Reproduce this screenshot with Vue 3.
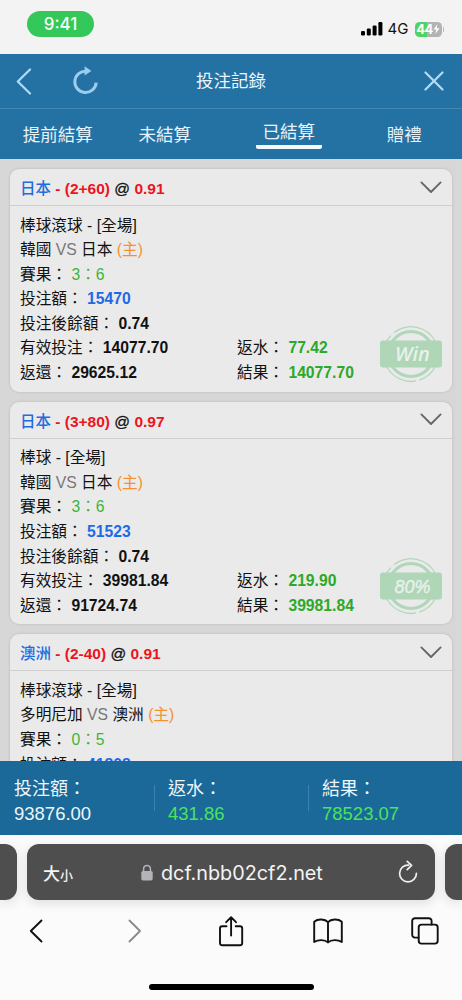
<template>
  <div class="phone">
    <div class="status-bar">
      <span class="clock">9:41</span>
      <div class="status-right">
        <svg class="signal" viewBox="0 0 22 14" width="22" height="14">
          <rect x="0" y="9" width="4" height="4.5" rx="1.2" />
          <rect x="5.8" y="6.5" width="4" height="7" rx="1.2" />
          <rect x="11.6" y="3.5" width="4" height="10" rx="1.2" />
          <rect x="17.4" y="0" width="4" height="13.5" rx="1.2" />
        </svg>
        <span class="network">4G</span>
        <div class="battery">
          <span>44</span>
          <svg viewBox="0 0 8 11" width="7" height="10"><path d="M5 0 0.5 6H3.6L2.8 11 7.5 4.6H4.3Z" /></svg>
        </div>
        <i class="battery-tip"></i>
      </div>
    </div>

    <header class="top-bar">
      <div class="top-left">
        <svg class="back" viewBox="0 0 16 28" width="16" height="28"><path d="M14 2.5 1.8 14.5 14 26.5" /></svg>
        <svg class="reload" viewBox="0 0 28 30" width="28" height="30">
          <path class="arc" d="M15.5 5.2A10.7 10.7 0 1 0 25.2 16.6" />
          <path class="head" d="M13.6 0.2 20.4 5 13.6 9.6Z" />
        </svg>
      </div>
      <h1>投注記錄</h1>
      <svg class="close" viewBox="0 0 20 20" width="20" height="20"><path d="M1.5 1.5 18.5 18.5M18.5 1.5 1.5 18.5" /></svg>
    </header>

    <nav class="tabs">
      <button
        v-for="tab in tabs"
        :key="tab.key"
        type="button"
        :class="['tab', tab.key, { active: tab.key === activeTab }]"
        @click="activeTab = tab.key"
      >
        <span>{{ tab.label }}</span>
      </button>
    </nav>

    <main class="list">
      <article v-for="bet in bets" :key="bet.id" class="card">
        <div class="card-header">
          <p>
            <span class="team">{{ bet.pick }}</span>
            <b class="red"> - ({{ bet.line }})</b>
            <span class="at"> @ </span>
            <b class="red">{{ bet.odds }}</b>
          </p>
          <svg viewBox="0 0 22 13" width="22" height="13"><path d="M1.4 1.4 11 11 20.6 1.4" /></svg>
        </div>
        <div class="card-body">
          <p>{{ bet.game }} - [全場]</p>
          <p>{{ bet.away }} <span class="vs">VS</span> {{ bet.home }} <span class="host">(主)</span></p>
          <p>賽果： <span class="score">{{ bet.score }}</span></p>
          <p>投注額： <b class="blue">{{ bet.stake }}</b></p>
          <template v-if="bet.result">
            <p>投注後餘額： <b>{{ bet.balance }}</b></p>
            <div class="pair">
              <p>有效投注： <b>{{ bet.valid }}</b></p>
              <p>返水： <b class="green">{{ bet.rebate }}</b></p>
            </div>
            <div class="pair">
              <p>返還： <b>{{ bet.returned }}</b></p>
              <p>結果： <b class="green">{{ bet.result }}</b></p>
            </div>
            <svg class="stamp" viewBox="0 0 62 58" width="62" height="58">
              <circle class="outer" cx="31" cy="29" r="27.3" stroke-dasharray="60 5 22 3 46 4 18 4" transform="rotate(-110 31 29)" />
              <circle class="inner" cx="31" cy="29" r="22.5" />
              <rect x="0" y="15.5" width="62" height="27" rx="3" />
              <text x="32.5" y="35.5" :class="{ percent: bet.stamp !== 'Win' }">{{ bet.stamp }}</text>
            </svg>
          </template>
        </div>
      </article>
    </main>

    <section class="totals">
      <div v-for="item in totals" :key="item.label" class="total">
        <p>{{ item.label }}：</p>
        <p :class="['value', { win: item.win }]">{{ item.value }}</p>
      </div>
    </section>

    <footer class="browser">
      <div class="address-row">
        <div class="side-page left"></div>
        <div class="address">
          <span class="text-size">大<small>小</small></span>
          <div class="url">
            <svg viewBox="0 0 12 17" width="12" height="17">
              <path class="shackle" d="M2.6 8V4.8a3.4 3.4 0 0 1 6.8 0V8" />
              <rect x="0.3" y="7" width="11.4" height="9.4" rx="1.6" />
            </svg>
            <span>dcf.nbb02cf2.net</span>
          </div>
          <svg class="refresh" viewBox="0 0 20 24" width="20" height="24">
            <path d="M10.6 5.1A8.4 8.4 0 1 0 18.4 13.4M9.2 1.4 13.6 5.4 9.2 9.6" />
          </svg>
        </div>
        <div class="side-page right"></div>
      </div>
      <div class="toolbar">
        <svg viewBox="0 0 14 24" height="24"><path d="M12.5 1.5 1.8 12 12.5 22.5" /></svg>
        <svg class="dim" viewBox="0 0 14 24" height="24"><path d="M3.5 1.5 14 12 3.5 22.5" /></svg>
        <svg viewBox="0 0 26 32" height="32">
          <path d="M8.5 11.2H4.2A2.2 2.2 0 0 0 2 13.4V28a2.2 2.2 0 0 0 2.2 2.2H22a2.2 2.2 0 0 0 2.2-2.2V13.4A2.2 2.2 0 0 0 22 11.2H17.7M13.1 20.5V2.5M8.2 7.2 13.1 2.2 18 7.2" />
        </svg>
        <svg viewBox="0 0 30 26" height="26">
          <path d="M15 4.2C12 .9 5 .5 1.2 3.7V24c4-2.6 10.5-2.6 13.8.4 3.3-3 9.8-3 13.8-.4V3.7C25 .5 18 .9 15 4.2ZM15 4.2V24.4" />
        </svg>
        <svg viewBox="0 0 28 28" height="28">
          <rect x="7.7" y="7.6" width="19" height="19" rx="2.8" />
          <path d="M7.5 20.6H4A2.8 2.8 0 0 1 1.2 17.8V4A2.8 2.8 0 0 1 4 1.2H17.8A2.8 2.8 0 0 1 20.6 4V7.5" />
        </svg>
      </div>
      <div class="home-indicator"></div>
    </footer>
  </div>
</template>

<script setup>
import { ref } from 'vue'

const activeTab = ref('settled')

const tabs = [
  { key: 'early', label: '提前結算' },
  { key: 'open', label: '未結算' },
  { key: 'settled', label: '已結算' },
  { key: 'gift', label: '贈禮' }
]

const bets = [
  {
    id: 1,
    pick: '日本',
    line: '2+60',
    odds: '0.91',
    game: '棒球滾球',
    away: '韓國',
    home: '日本',
    score: '3：6',
    stake: '15470',
    balance: '0.74',
    valid: '14077.70',
    returned: '29625.12',
    rebate: '77.42',
    result: '14077.70',
    stamp: 'Win'
  },
  {
    id: 2,
    pick: '日本',
    line: '3+80',
    odds: '0.97',
    game: '棒球',
    away: '韓國',
    home: '日本',
    score: '3：6',
    stake: '51523',
    balance: '0.74',
    valid: '39981.84',
    returned: '91724.74',
    rebate: '219.90',
    result: '39981.84',
    stamp: '80%'
  },
  {
    id: 3,
    pick: '澳洲',
    line: '2-40',
    odds: '0.91',
    game: '棒球滾球',
    away: '多明尼加',
    home: '澳洲',
    score: '0：5',
    stake: '41808'
  }
]

const totals = [
  { label: '投注額', value: '93876.00' },
  { label: '返水', value: '431.86', win: true },
  { label: '結果', value: '78523.07', win: true }
]
</script>

<style>
body {
  margin: 0;
}
</style>

<style scoped>
.phone {
  width: 462px;
  height: 1000px;
  display: flex;
  flex-direction: column;
  overflow: hidden;
  background: #f3f3f3;
  color: #111;
  font-family: "Liberation Sans", "Noto Sans CJK TC", sans-serif;
}

p,
h1 {
  margin: 0;
}

svg {
  display: block;
  flex: none;
  fill: none;
  stroke-linecap: round;
  stroke-linejoin: round;
}

.status-bar {
  height: 54px;
  flex: none;
  box-sizing: border-box;
  padding: 11px 18px 0 27px;
  display: flex;
  justify-content: space-between;
  align-items: flex-start;
  font-family: Inter, sans-serif;
}

.clock {
  width: 67px;
  height: 26px;
  border-radius: 13px;
  background: #34c759;
  color: #f4fff6;
  font-size: 17px;
  font-weight: 500;
  line-height: 26px;
  text-align: center;
}

.status-right {
  display: flex;
  align-items: center;
  padding-top: 9px;
}

.signal {
  fill: #000;
}

.network {
  margin: 0 6px 0 5px;
  font-size: 15px;
  line-height: 18px;
}

.battery {
  width: 27px;
  height: 15px;
  border-radius: 4.5px;
  background: linear-gradient(90deg, #4fd366 45%, #b3b3b5 45%);
  display: flex;
  align-items: center;
  justify-content: center;
  color: #fff;
  font-size: 13px;
  font-weight: 700;
  letter-spacing: -0.5px;
}

.battery svg {
  fill: #fff;
}

.battery-tip {
  width: 1.5px;
  height: 5px;
  margin-left: 1px;
  border-radius: 1px;
  background: #bbb;
}

.top-bar {
  height: 54px;
  flex: none;
  display: grid;
  grid-template-columns: 1fr auto 1fr;
  align-items: center;
  padding: 0 18px;
  background: #2472a4;
  border-bottom: 1px solid #4289b6;
}

.top-bar h1 {
  color: #eaf5fc;
  font-size: 17.5px;
  font-weight: 400;
  line-height: 24px;
}

.top-left {
  display: flex;
  align-items: center;
  gap: 39px;
  margin-left: -2px;
}

.back,
.close {
  stroke: #b5dbf4;
  stroke-width: 2.2;
}

.close {
  justify-self: end;
}

.reload .arc {
  stroke: #9ccdee;
  stroke-width: 3;
  stroke-linecap: butt;
}

.reload .head {
  fill: #9ccdee;
}

.tabs {
  height: 50px;
  flex: none;
  display: grid;
  grid-template-columns: repeat(4, 1fr);
  background: #2472a4;
}

.tab {
  border: 0;
  padding: 2px 0 0;
  background: none;
  color: #e6f3fb;
  font: inherit;
  font-size: 17.5px;
  line-height: 24px;
}

.tab.open {
  padding-right: 17px;
}

.tab.active {
  padding-top: 0;
}

.tab.active span {
  display: inline-block;
  width: 66px;
  line-height: 26px;
  border-bottom: 4px solid #f2f8fc;
  border-radius: 0 0 2px 2px;
}

.list {
  flex: 1;
  min-height: 0;
  overflow: hidden;
  padding: 10px 10px 0;
  background: #d7d7d7;
}

.card {
  height: 222.7px;
  margin-bottom: 10px;
  border-radius: 9px;
  background: #eaeaea;
  box-shadow: 0 0 3px rgba(0, 0, 0, 0.14);
  font-size: 15.7px;
}

.card-header {
  height: 37px;
  box-sizing: border-box;
  padding: 0 10px;
  display: flex;
  align-items: center;
  justify-content: space-between;
  border-bottom: 1px solid #cfcfcf;
  font-size: 15.5px;
}

.card-header svg {
  stroke: #676767;
  stroke-width: 1.9;
}

.team {
  color: #1d6ce0;
  font-weight: 500;
}

.at {
  -webkit-text-stroke: 0.3px #111;
}

.red {
  color: #ea1520;
}

.card-body {
  position: relative;
  padding: 7.5px 10px 0;
}

.card-body p {
  height: 24.6px;
  line-height: 24.6px;
  white-space: nowrap;
}

.pair {
  display: grid;
  grid-template-columns: 217px 1fr;
}

.vs {
  color: #777;
}

.host {
  color: #f4922e;
}

.score {
  color: #3fb43c;
}

.blue {
  color: #1e69e6;
}

.green {
  color: #2ba928;
}

.stamp {
  position: absolute;
  right: 10px;
  top: 118.5px;
}

.stamp circle {
  stroke: #b0d7b9;
  stroke-linecap: butt;
}

.stamp .outer {
  stroke-width: 1.2;
}

.stamp .inner {
  stroke-width: 3;
}

.stamp rect {
  fill: #aed6b7;
}

.stamp text {
  fill: #e8f1ea;
  font-family: "Open Sans", sans-serif;
  font-size: 20px;
  font-style: italic;
  font-weight: 600;
  text-anchor: middle;
}

.stamp .percent {
  font-family: "Liberation Sans", sans-serif;
  font-size: 18px;
  font-weight: 400;
  stroke: #e8f1ea;
  stroke-width: 0.4;
}

.totals {
  height: 74px;
  flex: none;
  box-sizing: border-box;
  padding-top: 15px;
  display: grid;
  grid-template-columns: repeat(3, 1fr);
  background: #1a6999;
  color: #eef6fb;
  font-size: 18px;
}

.total {
  position: relative;
  padding-left: 14px;
}

.total p {
  line-height: 26px;
}

.total .value {
  margin-top: -1px;
  font-size: 18.5px;
}

.total .win {
  color: #49e35c;
}

.total + .total::before {
  content: '';
  position: absolute;
  left: 0;
  top: 9px;
  width: 1px;
  height: 26px;
  background: #3c82ad;
}

.browser {
  height: 165px;
  flex: none;
  background: #fbfbfb;
  overflow: hidden;
}

.address-row {
  display: flex;
  gap: 10px;
  padding-top: 9px;
  height: 56px;
}

.address,
.side-page {
  border-radius: 12px;
  background: #4e4e4e;
  box-shadow: 0 3px 12px rgba(0, 0, 0, 0.12);
}

.side-page {
  width: 17px;
}

.side-page.left {
  border-radius: 0 12px 12px 0;
}

.side-page.right {
  border-radius: 12px 0 0 12px;
}

.address {
  flex: 1;
  box-sizing: border-box;
  padding: 0 17px 0 16px;
  display: grid;
  grid-template-columns: 98px 1fr auto;
  align-items: center;
  color: #f4f4f4;
}

.text-size {
  font-size: 17px;
  font-weight: 500;
}

.text-size small {
  font-size: 13px;
}

.url {
  display: flex;
  align-items: center;
  gap: 8px;
  padding-top: 1px;
  font-family: Inter, sans-serif;
  font-size: 19.8px;
}

.url svg {
  fill: #b4b4b8;
}

.url .shackle {
  fill: none;
  stroke: #b4b4b8;
  stroke-width: 1.5;
}

.refresh {
  stroke: #f0f0f0;
  stroke-width: 1.7;
}

.toolbar {
  height: 62px;
  padding: 0 22px 0 21px;
  display: flex;
  align-items: center;
  justify-content: space-between;
}

.toolbar svg {
  width: 30px;
  stroke: #111;
  stroke-width: 1.9;
}

.toolbar .dim {
  stroke: #8b8b8b;
}

.home-indicator {
  width: 165px;
  height: 6px;
  margin: 22px auto 0;
  border-radius: 3px;
  background: #000;
}
</style>
